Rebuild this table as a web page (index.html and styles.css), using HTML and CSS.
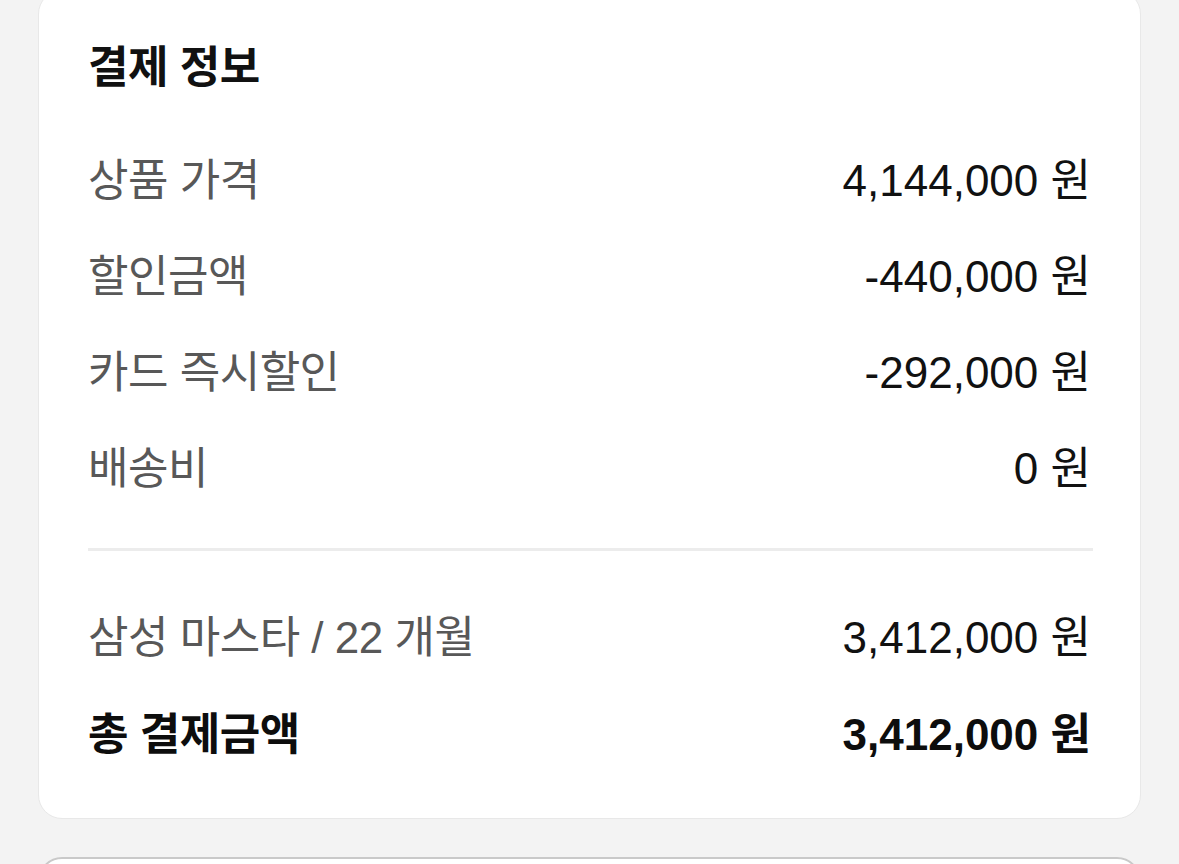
FILE: index.html
```html
<!DOCTYPE html>
<html lang="ko">
<head>
<meta charset="utf-8">
<link rel="stylesheet" href="styles.css">
</head>
<body>
  <section class="card">
    <h2 class="title">결제 정보</h2>
    <div class="group">
      <div class="row"><span class="label">상품 가격</span><span class="value">4,144,000 원</span></div>
      <div class="row"><span class="label">할인금액</span><span class="value">-440,000 원</span></div>
      <div class="row"><span class="label">카드 즉시할인</span><span class="value">-292,000 원</span></div>
      <div class="row"><span class="label">배송비</span><span class="value">0 원</span></div>
    </div>
    <hr class="divider">
    <div class="group">
      <div class="row"><span class="label">삼성 마스타 / 22 개월</span><span class="value">3,412,000 원</span></div>
      <div class="row total"><span class="label">총 결제금액</span><span class="value">3,412,000 원</span></div>
    </div>
  </section>
  <section class="card next"></section>
</body>
</html>
```

FILE: styles.css
```css
html, body {
  margin: 0;
  padding: 0;
  background: #f3f3f3;
  font-family: "Liberation Sans", "Noto Sans CJK KR", sans-serif;
}

body {
  height: 864px;
  overflow: hidden;
}

.card {
  box-sizing: border-box;
  width: 1103px;
  margin: -10px 0 0 38px;
  background: #ffffff;
  border: 1px solid #e8e8e8;
  border-radius: 24px;
  padding: 49px 49px 39px 49px;
}

.title {
  margin: 0;
  height: 56px;
  line-height: 56px;
  font-size: 44px;
  font-weight: 700;
  color: #111111;
  letter-spacing: -0.5px;
}

.group {
  display: flex;
  flex-direction: column;
}

.title + .group {
  margin-top: 33px;
}

.row {
  display: flex;
  justify-content: space-between;
  align-items: center;
  height: 96px;
  font-size: 44px;
}

.label {
  color: #585858;
  letter-spacing: -0.5px;
}

.value {
  color: #111111;
  letter-spacing: 0;
}

.row.total .label,
.row.total .value {
  color: #0d0d0d;
  font-weight: 700;
}

.divider {
  border: 0;
  height: 3px;
  background: #ececec;
  margin: 35px -2px 34px 0;
}

.group + .divider + .group .row {
  height: 97px;
}

.card.next {
  margin-top: 38px;
  height: 60px;
  padding: 0;
  border: 2px solid #c9c9c9;
}
```
